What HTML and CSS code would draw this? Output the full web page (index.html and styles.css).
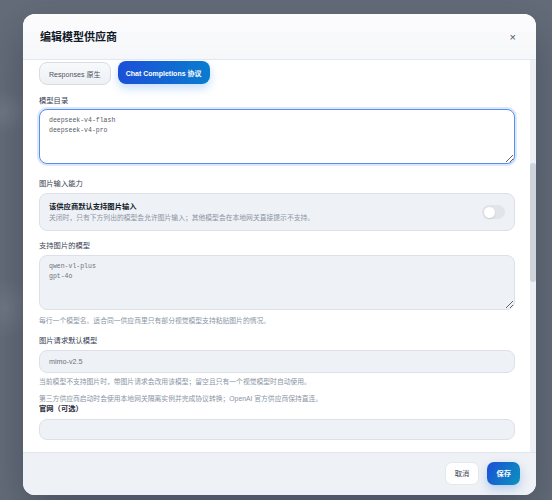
FILE: index.html
```html
<!DOCTYPE html>
<html lang="zh-CN">
<head>
    <meta charset="UTF-8">
    <meta name="viewport" content="width=device-width, initial-scale=1.0">
    <title>编辑模型供应商</title>
    <link rel="stylesheet" href="styles.css">
</head>
<body>
    <div class="modal">
        <!-- Sarlavha -->
        <div class="modal-header">
            <h2>编辑模型供应商</h2>
            <button class="close-btn">×</button>
        </div>

        <div class="modal-body">
            <div class="scroll-content">
                <div class="protocol-tabs">
                    <button class="tab">Responses 原生</button>
                    <button class="tab active">Chat Completions 协议</button>
                </div>

                <div class="field first">
                    <label for="model-list">模型目录</label>
                    <textarea id="model-list" class="focused" autofocus>deepseek-v4-flash
deepseek-v4-pro</textarea>
                </div>

                <div class="field second">
                    <label>图片输入能力</label>
                    <div class="toggle-card">
                        <div class="toggle-text">
                            <div class="toggle-title">该供应商默认支持图片输入</div>
                            <div class="toggle-desc">关闭时，只有下方列出的模型会允许图片输入；其他模型会在本地网关直接提示不支持。</div>
                        </div>
                        <span class="switch"></span>
                    </div>
                </div>

                <div class="field third">
                    <label for="vision-models">支持图片的模型</label>
                    <textarea id="vision-models" class="muted" readonly>qwen-vl-plus
gpt-4o</textarea>
                    <p class="hint spaced">每行一个模型名。适合同一供应商里只有部分视觉模型支持粘贴图片的情况。</p>
                </div>

                <div class="field fourth">
                    <label for="fallback-model">图片请求默认模型</label>
                    <input type="text" id="fallback-model" class="muted" value="mimo-v2.5" readonly>
                    <p class="hint">当前模型不支持图片时，带图片请求会改用该模型；留空且只有一个视觉模型时自动使用。</p>
                    <p class="hint note">第三方供应商启动时会使用本地网关隔离实例并完成协议转换；OpenAI 官方供应商保持直连。</p>
                </div>

                <div class="field fifth">
                    <label for="website" class="strong">官网（可选）</label>
                    <input type="text" id="website" class="muted short">
                </div>
            </div>

            <!-- Aylantirish chizig'i -->
            <div class="scrollbar"><div class="scroll-thumb"></div></div>
        </div>

        <div class="modal-footer">
            <button class="btn-cancel">取消</button>
            <button class="btn-save">保存</button>
        </div>
    </div>
</body>
</html>
```

FILE: styles.css
```css
* {
    box-sizing: border-box;
}
body {
    margin: 0;
    height: 500px;
    padding: 14px 16px 0 23px;
    overflow: hidden;
    font-family: "Liberation Sans", "Noto Sans CJK SC", sans-serif;
    background-color: #646c79;
    background-image:
        radial-gradient(ellipse 30px 22px at 4px 112px, rgba(255, 255, 255, 0.08), transparent),
        radial-gradient(ellipse 30px 30px at 6px 308px, rgba(255, 255, 255, 0.08), transparent);
}
.modal {
    width: 513px;
    height: 481px;
    display: flex;
    flex-direction: column;
    background: #fff;
    border-radius: 12px;
    overflow: hidden;
    box-shadow: 0 16px 40px rgba(15, 23, 42, 0.3);
}
.modal-header {
    height: 46px;
    flex-shrink: 0;
    display: flex;
    align-items: center;
    justify-content: space-between;
    padding: 0 20px 0 17px;
    background: linear-gradient(#fcfcfd, #f6f7fa);
    border-bottom: 1px solid #e3e7ee;
}
.modal-header h2 {
    margin: 0;
    font-size: 11px;
    line-height: 14px;
    font-weight: 700;
    color: #111827;
}
.close-btn {
    border: none;
    background: none;
    padding: 0;
    font-size: 11px;
    line-height: 12px;
    color: #4b5563;
    cursor: pointer;
}
.modal-body {
    flex: 1;
    min-height: 0;
    display: flex;
}
.scroll-content {
    flex: 1;
    padding: 1px 15px 0 16px;
    overflow: hidden;
}
.scrollbar {
    width: 6px;
    background: #eef0f3;
    padding-top: 103px;
}
.scroll-thumb {
    height: 119px;
    background: #cfd3da;
    border-radius: 3px;
}
.protocol-tabs {
    display: flex;
    gap: 7px;
    align-items: flex-start;
}
.tab {
    height: 23px;
    padding: 0 9px;
    font-family: inherit;
    font-size: 7.1px;
    color: #4b5563;
    background: linear-gradient(#f8f9fb, #eef0f4);
    border: 1px solid #d8dce3;
    border-radius: 8px;
    margin-top: 1px;
}
.tab.active {
    margin-top: 0;
    border: none;
    padding: 0 8px;
    font-size: 7px;
    color: #fff;
    font-weight: 700;
    background: linear-gradient(90deg, #1c4fd8, #0a7ccf);
    box-shadow: 0 4px 10px rgba(37, 130, 235, 0.28);
}
.field label {
    display: block;
    font-size: 7.3px;
    line-height: 10px;
    color: #374151;
    margin-bottom: 4px;
}
.field label.strong {
    font-weight: 700;
    color: #1f2937;
    margin-bottom: 5px;
}
.field.first {
    margin-top: 11px;
}
.field.first label {
    margin-bottom: 3px;
}
.field.second {
    margin-top: 15px;
}
.field.third {
    margin-top: 10px;
}
.field.fourth {
    margin-top: 10px;
}
textarea {
    display: block;
    width: 100%;
    height: 55px;
    padding: 6px 9px;
    font-family: "Liberation Mono", monospace;
    font-size: 6.5px;
    line-height: 10px;
    color: #555b66;
    border: 1px solid #dde1e7;
    border-radius: 8px;
    outline: none;
    resize: vertical;
}
textarea.focused {
    border-color: #5b8def;
    box-shadow: 0 0 0 2px #dde7fb;
}
.muted {
    background: #eef1f5;
    border: 1px solid #dde1e7;
    color: #6b7280;
}
input {
    display: block;
    width: 100%;
    height: 23px;
    padding: 0 9px;
    font-family: inherit;
    font-size: 7.2px;
    border-radius: 8px;
    outline: none;
}
input.short {
    height: 21px;
}
.toggle-card {
    display: flex;
    align-items: center;
    justify-content: space-between;
    height: 38px;
    padding: 0 9px;
    background: #eef1f5;
    border: 1px solid #dde1e7;
    border-radius: 8px;
}
.toggle-title {
    font-size: 7.3px;
    line-height: 10px;
    font-weight: 700;
    color: #111827;
}
.toggle-desc {
    font-size: 6.8px;
    line-height: 10px;
    color: #8b95a5;
    margin-top: 1px;
}
.switch {
    position: relative;
    width: 23px;
    height: 14px;
    border-radius: 7px;
    background: #e1e4e9;
}
.switch::after {
    content: "";
    position: absolute;
    left: 2px;
    top: 1.5px;
    width: 11px;
    height: 11px;
    border-radius: 50%;
    background: #fff;
    box-shadow: 0 1px 2px rgba(0, 0, 0, 0.12);
}
.hint {
    margin: 4px 0 0;
    font-size: 6.8px;
    line-height: 10px;
    color: #8b95a5;
}
.hint.spaced {
    margin-top: 6px;
}
.hint.note {
    margin-top: 7px;
}
.modal-footer {
    height: 43px;
    flex-shrink: 0;
    display: flex;
    align-items: center;
    justify-content: flex-end;
    gap: 8px;
    padding: 0 16px 2px 0;
    background: #eef1f5;
    border-top: 1px solid #e1e5eb;
}
.modal-footer button {
    height: 23px;
    padding: 0 9px;
    font-family: inherit;
    font-size: 7.3px;
    border-radius: 7px;
    cursor: pointer;
}
.btn-cancel {
    background: #fff;
    border: 1px solid #e5e7eb;
    color: #374151;
}
.btn-save {
    border: none;
    color: #fff;
    font-weight: 700;
    background: linear-gradient(120deg, #1a4fd6, #0b93bd);
    box-shadow: 0 4px 10px rgba(37, 99, 235, 0.28);
}
```
